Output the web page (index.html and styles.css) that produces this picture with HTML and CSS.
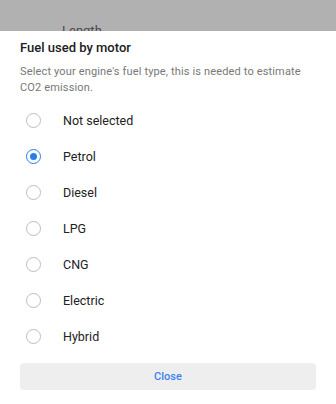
FILE: index.html
```html
<!DOCTYPE html>
<html>
<head>
    <title>Fuel used by motor</title>
    <link rel="stylesheet" href="styles.css">
</head>
<body>
    <div class="backdrop">
        <div class="backdrop-label">Length</div>
    </div>
    <div class="sheet">
        <h2 class="sheet-title">Fuel used by motor</h2>
        <p class="sheet-text">Select your engine's fuel type, this is needed to estimate CO2 emission.</p>

        <ul class="options">
            <li class="option"><span class="radio"></span>Not selected</li>
            <li class="option"><span class="radio checked"></span>Petrol</li>
            <li class="option"><span class="radio"></span>Diesel</li>
            <li class="option"><span class="radio"></span>LPG</li>
            <li class="option"><span class="radio"></span>CNG</li>
            <li class="option"><span class="radio"></span>Electric</li>
            <li class="option"><span class="radio"></span>Hybrid</li>
        </ul>

        <button class="close-button">Close</button>
    </div>
</body>
</html>
```

FILE: styles.css
```css
body {
    margin: 0;
    padding: 0;
    font-family: Roboto, "Liberation Sans", Arial, sans-serif;
    background: #fff;
    width: 336px;
    height: 404px;
    overflow: hidden;
}
.backdrop {
    height: 31px;
    background: #b1b1b1;
    overflow: hidden;
}
.backdrop-label {
    padding: 22px 0 0 62px;
    font-size: 13px;
    line-height: 18px;
    color: #4a4a4a;
}
.sheet {
    padding: 0 20px;
}
.sheet-title {
    margin: 8px 0 0;
    font-size: 13px;
    line-height: 18px;
    font-weight: 500;
    color: #202020;
}
.sheet-text {
    margin: 7px 0 0;
    font-size: 11px;
    line-height: 16px;
    letter-spacing: 0.15px;
    color: #787878;
}
.options {
    list-style: none;
    padding: 0;
    margin: 6px 0 0;
}
.option {
    display: flex;
    align-items: center;
    height: 36px;
    font-size: 12.5px;
    color: #222;
}
.radio {
    box-sizing: border-box;
    width: 15px;
    height: 15px;
    margin: 0 22px 0 6px;
    border: 1.5px solid #bdbdbd;
    border-radius: 50%;
    display: flex;
    align-items: center;
    justify-content: center;
}
.radio.checked {
    border-color: #2b7de9;
}
.radio.checked::after {
    content: "";
    width: 7px;
    height: 7px;
    border-radius: 50%;
    background: #2b7de9;
}
.close-button {
    display: block;
    width: 100%;
    height: 27px;
    margin-top: 9px;
    border: none;
    border-radius: 4px;
    background: #eee;
    color: #3b82f0;
    font-family: inherit;
    font-size: 11px;
    font-weight: 500;
}
```
